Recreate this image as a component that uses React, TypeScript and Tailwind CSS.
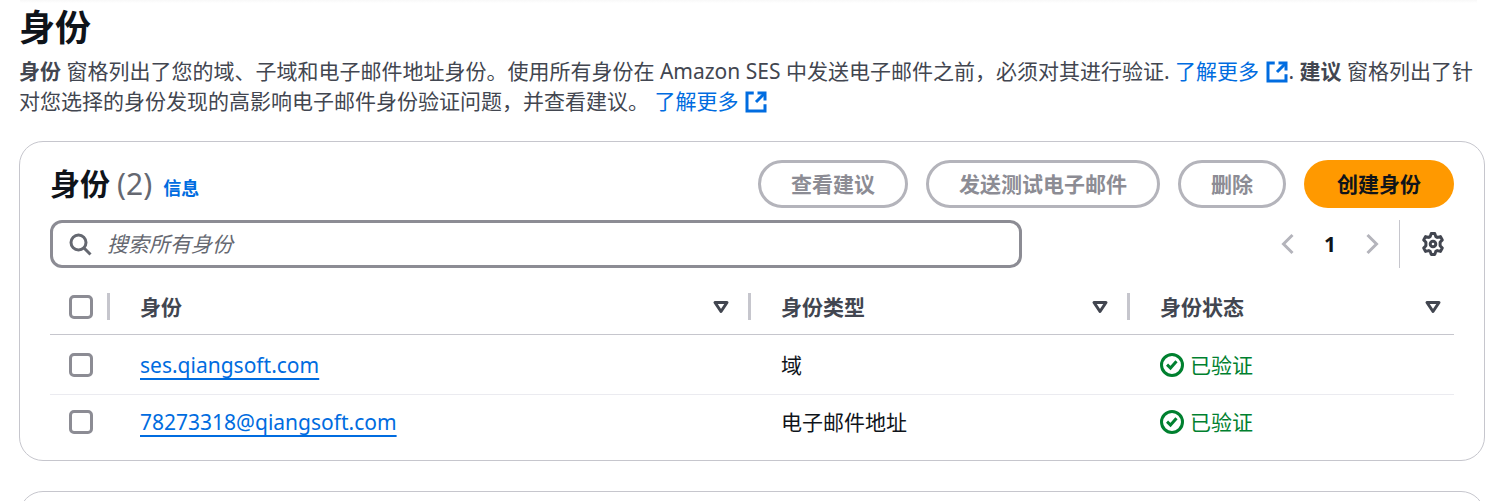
import React from "react";

const identities = [
  { name: "ses.qiangsoft.com", type: "域", status: "已验证" },
  { name: "78273318@qiangsoft.com", type: "电子邮件地址", status: "已验证" },
];

const columns = ["身份", "身份类型", "身份状态"];

function ExternalIcon() {
  return (
    <svg viewBox="0 0 16 16" className="inline-block size-6 align-[-5px]" fill="none" stroke="currentColor" strokeWidth="2" aria-hidden="true">
      <path d="M6.5 2H2v12h12v-4.5" />
      <path d="M9 2h5v5" />
      <path d="M14 2 8 8" />
    </svg>
  );
}

function LearnMore() {
  return (
    <a href="#learn-more" className="whitespace-nowrap text-[#006ce0]">
      了解更多 <ExternalIcon />
    </a>
  );
}

function SearchIcon() {
  return (
    <svg viewBox="0 0 16 16" className="size-6 shrink-0 text-[#656871]" fill="none" stroke="currentColor" strokeWidth="2" aria-hidden="true">
      <circle cx="7" cy="7" r="5" />
      <path d="m15 15-4.5-4.5" />
    </svg>
  );
}

function AngleIcon({ right = false }: { right?: boolean }) {
  return (
    <svg viewBox="0 0 16 16" className="size-6" fill="none" stroke="currentColor" strokeWidth="2" aria-hidden="true">
      <path d={right ? "m5 2 6 6-6 6" : "m11 2-6 6 6 6"} />
    </svg>
  );
}

function GearIcon() {
  return (
    <svg viewBox="0 0 24 24" className="size-6" fill="none" stroke="currentColor" strokeWidth="3" strokeLinejoin="round" aria-hidden="true">
      <path d="M10.2 1.6h3.6l1 3 1.5.8 3.1-.8 1.9 3.3-2.2 2.3v3.6l2.2 2.3-1.9 3.3-3.1-.8-1.5.8-1 3h-3.6l-1-3-1.5-.8-3.1.8-1.900-3.3 2.2-2.3v-3.6L2.7 7.9l1.9-3.3 3.1.8 1.5-.8z" />
      <circle cx="12" cy="12" r="2.8" />
    </svg>
  );
}

function CaretIcon() {
  return (
    <svg viewBox="0 0 16 16" className="size-6" fill="none" stroke="currentColor" strokeWidth="2" strokeLinejoin="round" aria-hidden="true">
      <path d="M4 5h8l-4 6z" />
    </svg>
  );
}

function CheckIcon() {
  return (
    <svg viewBox="0 0 16 16" className="size-6" fill="none" stroke="currentColor" strokeWidth="2" aria-hidden="true">
      <circle cx="8" cy="8" r="7" />
      <path d="m4.7 7.8 2.3 2.2 4-4.5" />
    </svg>
  );
}

function Checkbox({ label }: { label: string }) {
  return (
    <input
      type="checkbox"
      aria-label={label}
      className="block size-6 appearance-none rounded-[5px] border-3 border-[#8c8c94] bg-white checked:border-[#006ce0] checked:bg-[#006ce0]"
    />
  );
}

function DisabledButton({ children }: { children: React.ReactNode }) {
  return (
    <button type="button" disabled className="h-12 rounded-full border-3 border-[#b4b4bb] px-[30px] font-bold text-[#8c8c94]">
      {children}
    </button>
  );
}

export default function App() {
  return (
    <div className="min-h-screen bg-white font-['Noto_Sans','Noto_Sans_CJK_SC',sans-serif] text-[21px] leading-[30px] text-[#0f141a]">
      <div className="mx-5 h-[3px] bg-linear-to-b from-[#f8f8f8] to-white" />
      <main className="pr-3 pl-[19px]">
        <h1 className="pt-[2px] text-4xl leading-[45px] font-bold">身份</h1>
        <p className="mt-[6px] text-[#424650]">
          <strong>身份</strong> 窗格列出了您的域、子域和电子邮件地址身份。使用所有身份在 Amazon SES 中发送电子邮件之前，必须对其进行验证. <LearnMore />. <strong>建议</strong> 窗格列出了针对您选择的身份发现的高影响电子邮件身份验证问题，并查看建议。 <LearnMore />
        </p>

        <section className="mt-[25px] rounded-3xl border border-[#c6c6cd] px-[30px] pt-[18px] pb-[11px]">
          <div className="flex items-center justify-between">
            <h2 className="flex items-baseline text-[30px] leading-9 font-bold">
              身份
              <span className="ml-[7px] font-normal text-[#656871]">(2)</span>
              <a href="#info" className="ml-[11px] text-lg leading-6 text-[#006ce0]">信息</a>
            </h2>
            <div className="flex gap-[18px]">
              <DisabledButton>查看建议</DisabledButton>
              <DisabledButton>发送测试电子邮件</DisabledButton>
              <DisabledButton>删除</DisabledButton>
              <button type="button" className="h-12 rounded-full bg-[#ff9900] px-[33px] font-bold">创建身份</button>
            </div>
          </div>

          <div className="mt-3 flex items-center justify-between">
            <label className="flex h-12 w-[69.2%] items-center gap-[15px] rounded-xl border-3 border-[#8c8c94] px-[15px]">
              <SearchIcon />
              <input type="text" aria-label="搜索所有身份" placeholder="搜索所有身份" className="min-w-0 flex-1 outline-none placeholder:text-[#656871] placeholder:italic" />
            </label>
            <div className="flex h-12 items-center">
              <button type="button" disabled aria-label="上一页" className="text-[#b4b4bb]"><AngleIcon /></button>
              <button type="button" className="w-[60px] text-center font-bold">1</button>
              <button type="button" disabled aria-label="下一页" className="text-[#b4b4bb]"><AngleIcon right /></button>
              <div className="ml-[15px] flex h-12 items-center border-l border-[#c6c6cd] pr-[9px] pl-[21px]">
                <button type="button" aria-label="首选项" className="text-[#424650]"><GearIcon /></button>
              </div>
            </div>
          </div>

          <table className="mt-[11px] w-full table-fixed border-separate border-spacing-0 text-left">
            <colgroup>
              <col className="w-[60px]" />
              <col className="w-[45.65%]" />
              <col className="w-[27%]" />
              <col />
            </colgroup>
            <thead className="text-[#424650]">
              <tr>
                <th className="h-14 border-b border-[#c6c6cd] p-0">
                  <div className="flex items-center justify-between pl-[19px]">
                    <Checkbox label="全选" />
                    <span className="h-[27px] w-[3px] bg-[#c6c6cd]" />
                  </div>
                </th>
                {columns.map((column, i) => (
                  <th key={column} className="h-14 border-b border-[#c6c6cd] p-0">
                    <div className="flex items-center pl-[30px]">
                      <span className="flex-1">{column}</span>
                      <button type="button" aria-label={`按${column}排序`} className={i < 2 ? "mr-[15px]" : "mr-[9px]"}><CaretIcon /></button>
                      {i < 2 && <span className="h-[27px] w-[3px] bg-[#c6c6cd]" />}
                    </div>
                  </th>
                ))}
              </tr>
            </thead>
            <tbody className="[&>tr:first-child>td]:h-[60px] [&>tr:first-child>td]:border-b [&>tr:last-child>td]:h-[54px]">
              {identities.map((identity) => (
                <tr key={identity.name}>
                  <td className="border-[#ebebf0] p-0 pl-[19px]"><Checkbox label={identity.name} /></td>
                  <td className="border-[#ebebf0] p-0 pl-[30px]">
                    <a href="#identity" className="text-[#006ce0] underline decoration-2 underline-offset-[5px] [text-decoration-skip-ink:none]">{identity.name}</a>
                  </td>
                  <td className="border-[#ebebf0] p-0 pl-[30px]">{identity.type}</td>
                  <td className="border-[#ebebf0] p-0 pl-[30px]">
                    <span className="flex items-center gap-[6px] text-[#00802f]"><CheckIcon />{identity.status}</span>
                  </td>
                </tr>
              ))}
            </tbody>
          </table>
        </section>
      </main>
      <div className="mt-[30px] h-[10px] overflow-hidden pr-3 pl-[19px]">
        <section className="h-16 rounded-3xl border border-[#c6c6cd]" />
      </div>
    </div>
  );
}
